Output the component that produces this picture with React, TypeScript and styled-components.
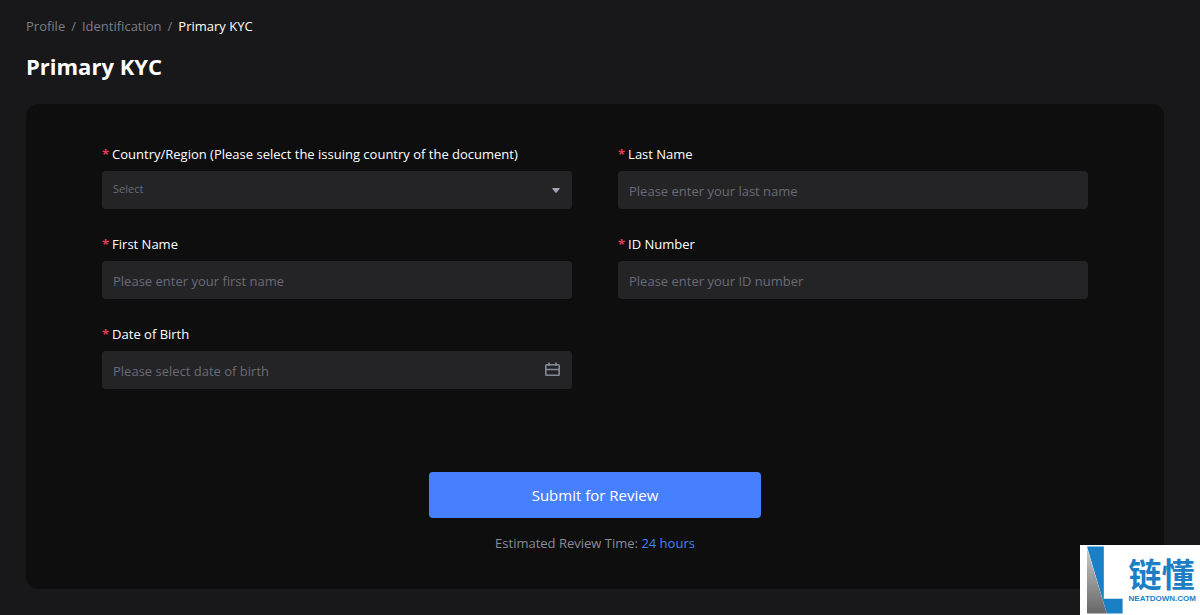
import React from "react";
import styled, { createGlobalStyle } from "styled-components";

const GlobalStyle = createGlobalStyle`
  *, *::before, *::after { box-sizing: border-box; }
  body {
    margin: 0;
    background: #18181a;
    color: #ffffff;
    font-family: "Segoe UI", "Open Sans", "Noto Sans", sans-serif;
    font-size: 13px;
    line-height: 22px;
  }
`;

const Page = styled.main`
  min-height: 100vh;
  padding: 15px 36px 26px 26px;
`;

const Breadcrumb = styled.nav`
  display: flex;
  gap: 6px;
  color: #7b7e86;
`;

const Crumb = styled.a`
  color: #7b7e86;
  text-decoration: none;
`;

const CurrentCrumb = styled.span`
  color: #ffffff;
`;

const Title = styled.h1`
  margin: 14px 0 22px;
  font-size: 22px;
  line-height: 31px;
  font-weight: 700;
`;

const Card = styled.form`
  display: flex;
  flex-direction: column;
  align-items: center;
  padding: 39px 76px 35px;
  border-radius: 12px;
  background: #0e0e0f;
`;

const Fields = styled.div`
  display: grid;
  grid-template-columns: repeat(2, minmax(0, 1fr));
  gap: 24px 46px;
  width: 100%;
`;

const Field = styled.div`
  display: flex;
  flex-direction: column;
  gap: 6px;
`;

const Label = styled.label`
  display: flex;
  gap: 3px;
`;

const Required = styled.span`
  color: #e03a55;
  font-weight: 700;
`;

const Control = styled.div`
  display: flex;
  align-items: center;
  height: 38px;
  padding: 0 12px 0 11px;
  border-radius: 4px;
  background: #242426;
`;

const TextInput = styled.input`
  flex: 1;
  min-width: 0;
  height: 38px;
  padding: 2px 0 0;
  border: 0;
  outline: 0;
  background: transparent;
  color: #ffffff;
  font: inherit;
  &::placeholder {
    color: #686b77;
    opacity: 1;
  }
`;

const SelectInput = styled.select`
  flex: 1;
  min-width: 0;
  height: 38px;
  padding: 0 0 2px;
  border: 0;
  outline: 0;
  appearance: none;
  background: transparent;
  color: #686b77;
  font: inherit;
  font-size: 11px;
`;

const IconButton = styled.button`
  display: flex;
  padding: 0 0 2px;
  border: 0;
  background: none;
  color: #858997;
`;

const Submit = styled.button`
  width: 332px;
  max-width: 100%;
  height: 46px;
  margin: 83px 0 14px;
  border: 0;
  border-radius: 4px;
  background: #4680ff;
  color: #ffffff;
  font: inherit;
  font-size: 15px;
`;

const Estimate = styled.p`
  margin: 0;
  color: #898c95;
  font-weight: 500;
`;

const Hours = styled.span`
  color: #4680ff;
`;

const Badge = styled.aside`
  position: fixed;
  right: 0;
  bottom: 0;
  display: flex;
  gap: 6px;
  width: 120px;
  height: 70px;
  padding: 1px 4px 1px 7px;
  background: #ffffff;
  color: #1b7fc6;
`;

const BadgeText = styled.div`
  display: flex;
  flex-direction: column;
  padding-top: 9px;
`;

const BadgeName = styled.span`
  font-family: "Noto Sans CJK SC", sans-serif;
  font-size: 33px;
  line-height: 36px;
  font-weight: 700;
`;

const BadgeSite = styled.span`
  font-family: "Liberation Sans", sans-serif;
  font-size: 8px;
  line-height: 16px;
  font-weight: 700;
`;

function FieldLabel({ id, text }: { id: string; text: string }) {
  return (
    <Label htmlFor={id}>
      <Required>*</Required>
      {text}
    </Label>
  );
}

function TextField({ id, label, placeholder, children }: {
  id: string;
  label: string;
  placeholder: string;
  children?: React.ReactNode;
}) {
  return (
    <Field>
      <FieldLabel id={id} text={label} />
      <Control>
        <TextInput id={id} type="text" placeholder={placeholder} required />
        {children}
      </Control>
    </Field>
  );
}

export default function App() {
  return (
    <>
      <GlobalStyle />
      <Page>
        <Breadcrumb aria-label="Breadcrumb">
          <Crumb href="#profile">Profile</Crumb>
          <span>/</span>
          <Crumb href="#identification">Identification</Crumb>
          <span>/</span>
          <CurrentCrumb aria-current="page">Primary KYC</CurrentCrumb>
        </Breadcrumb>
        <Title>Primary KYC</Title>
        <Card onSubmit={(event) => event.preventDefault()}>
          <Fields>
            <Field>
              <FieldLabel
                id="country"
                text="Country/Region (Please select the issuing country of the document)"
              />
              <Control>
                <SelectInput id="country" defaultValue="" required>
                  <option value="">Select</option>
                </SelectInput>
                <svg width="8" height="5" viewBox="0 0 8 5" aria-hidden="true">
                  <path d="M0.6 0H7.4Q8.2 0 7.6 0.8L4.6 4.6Q4 5.2 3.4 4.6L0.4 0.8Q-0.2 0 0.6 0Z" fill="#a3a6b2" />
                </svg>
              </Control>
            </Field>
            <TextField id="last-name" label="Last Name" placeholder="Please enter your last name" />
            <TextField id="first-name" label="First Name" placeholder="Please enter your first name" />
            <TextField id="id-number" label="ID Number" placeholder="Please enter your ID number" />
            <TextField id="birth" label="Date of Birth" placeholder="Please select date of birth">
              <IconButton type="button" aria-label="Open calendar">
                <svg width="15" height="14" viewBox="0 0 15 14" fill="none" stroke="currentColor" strokeWidth="1.6" aria-hidden="true">
                  <rect x="0.8" y="2.8" width="13.4" height="10.4" rx="0.8" />
                  <path d="M0.8 7.5H14.2M4 0.5V4M11 0.5V4" />
                </svg>
              </IconButton>
            </TextField>
          </Fields>
          <Submit type="submit">Submit for Review</Submit>
          <Estimate>
            Estimated Review Time: <Hours>24 hours</Hours>
          </Estimate>
        </Card>
      </Page>
      <Badge>
        <svg width="36" height="68" viewBox="0 0 36 68" aria-hidden="true">
          <defs>
            <linearGradient id="fold" x1="0" y1="0" x2="0" y2="1">
              <stop offset="0" stopColor="#c9c9c9" />
              <stop offset="1" stopColor="#666666" />
            </linearGradient>
          </defs>
          <path d="M0 0H17V53H36V68H20Z" fill="#1b7fc6" />
          <path d="M0 2L20 68H0Z" fill="url(#fold)" />
        </svg>
        <BadgeText>
          <BadgeName lang="zh">链懂</BadgeName>
          <BadgeSite>NEATDOWN.COM</BadgeSite>
        </BadgeText>
      </Badge>
    </>
  );
}
